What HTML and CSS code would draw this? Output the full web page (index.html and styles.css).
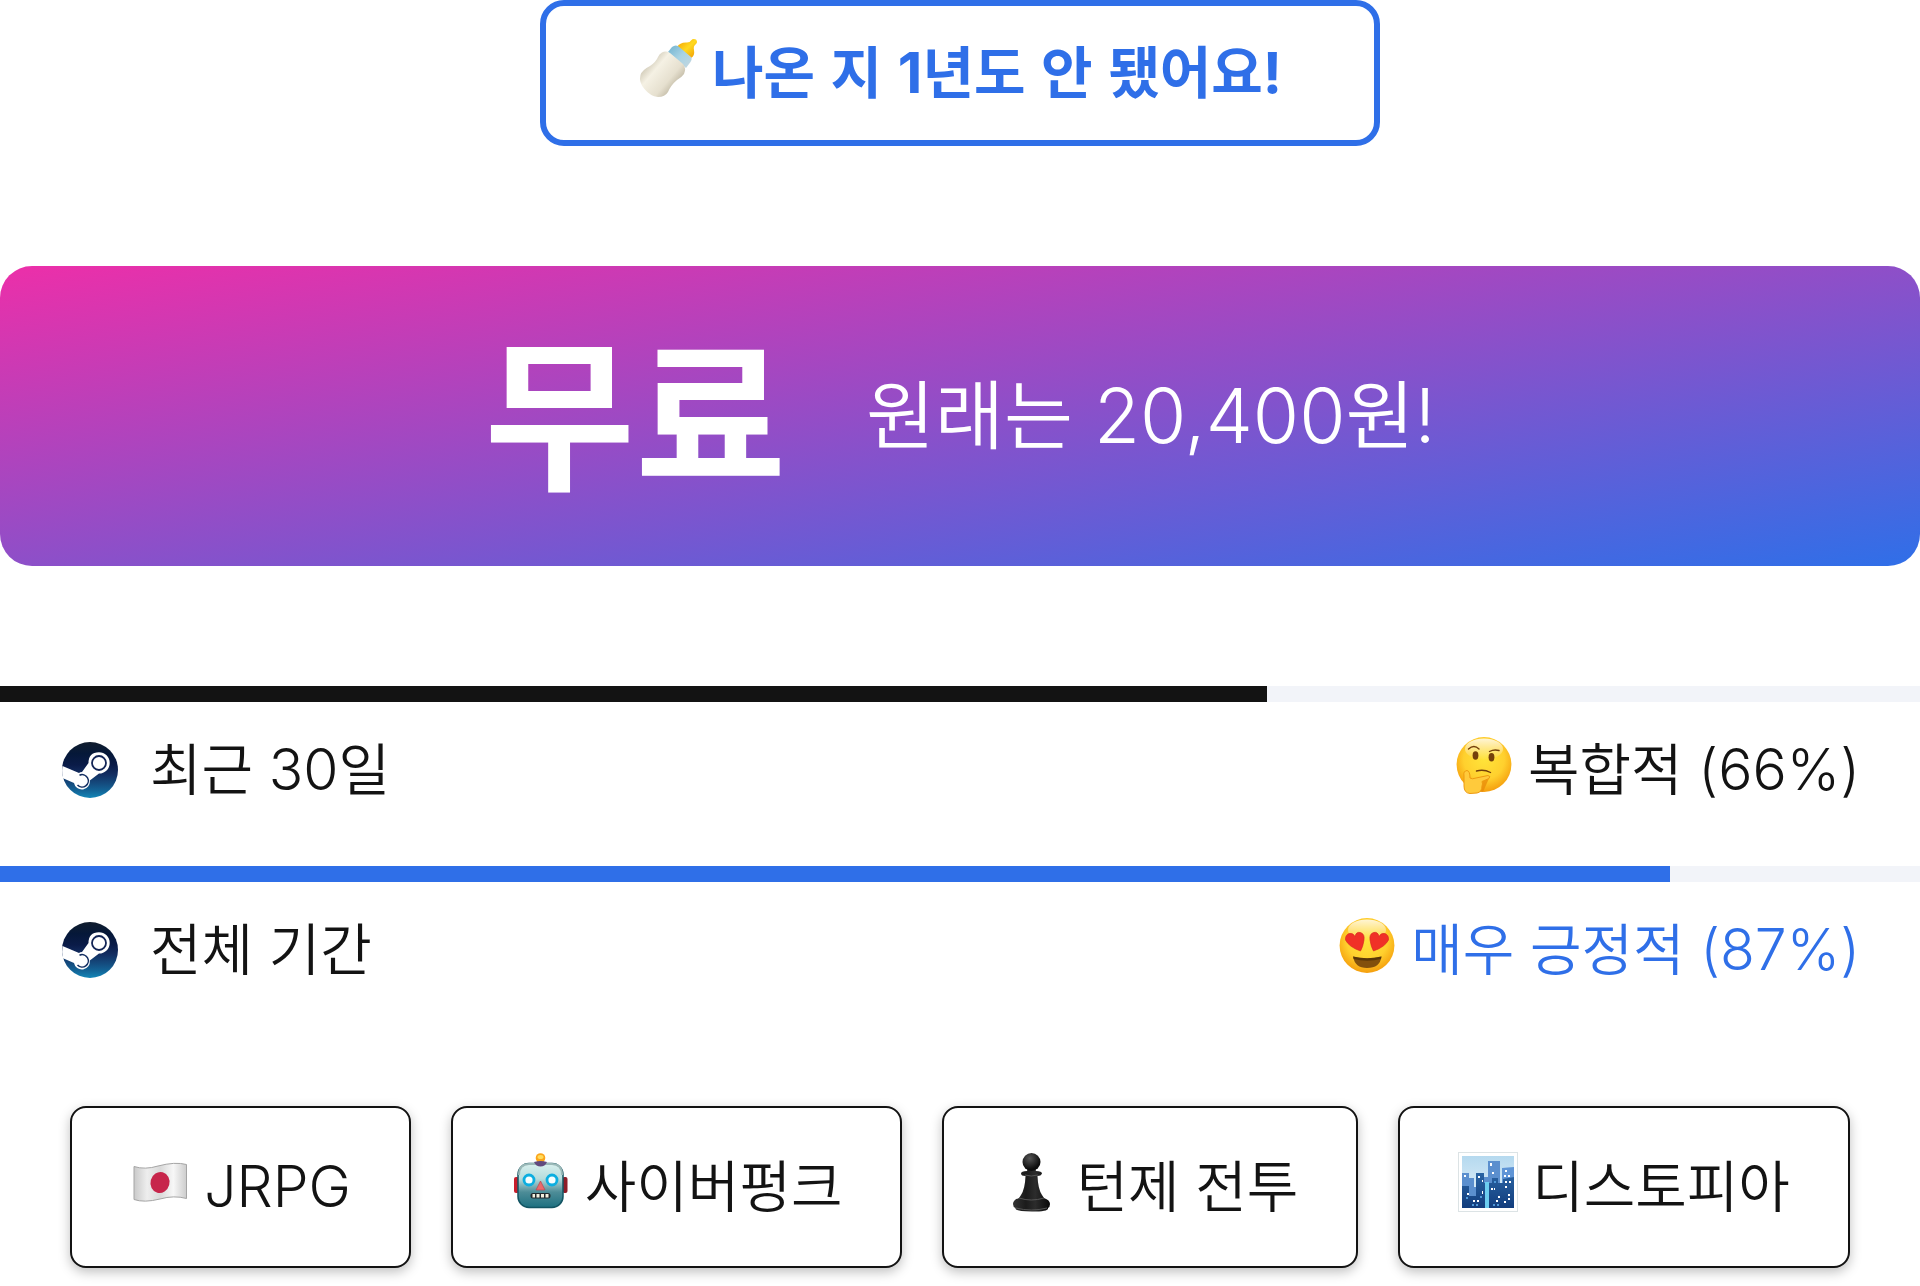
FILE: index.html
```html
<!DOCTYPE html>
<html lang="ko">
<head>
<meta charset="utf-8">
<meta name="viewport" content="width=device-width, initial-scale=1">
<title>게임 정보</title>
<link rel="stylesheet" href="styles.css">
</head>
<body>
<svg class="defs" width="0" height="0" aria-hidden="true">
  <defs>
    <linearGradient id="steam-bg" x1="0" y1="0" x2="0" y2="1">
      <stop offset="0" stop-color="#111d2e"/><stop offset=".21" stop-color="#051839"/><stop offset=".41" stop-color="#0a1b48"/><stop offset=".58" stop-color="#132e62"/><stop offset=".74" stop-color="#144b7e"/><stop offset=".87" stop-color="#136497"/><stop offset="1" stop-color="#1387b8"/>
    </linearGradient>
    <radialGradient id="face" cx=".5" cy=".4" r=".62">
      <stop offset="0" stop-color="#ffe43a"/><stop offset=".6" stop-color="#ffd02e"/><stop offset="1" stop-color="#f49a0a"/>
    </radialGradient>
    <linearGradient id="shine" x1="0" y1="0" x2="0" y2="1">
      <stop offset="0" stop-color="#fff" stop-opacity=".8"/><stop offset="1" stop-color="#fff" stop-opacity="0"/>
    </linearGradient>
    <symbol id="steam" viewBox="0 0 60 60">
      <circle cx="30" cy="30" r="28" fill="url(#steam-bg)"/>
      <path fill="#fff" d="M2.500 26 L19 33 Q20 32 22 32 L28.500 23 Q28.500 12.200 39 12.200 A10.700 10.700 0 0 1 39 33.600 L29.800 40.500 A8 8 0 0 1 14 43 L3 38.200 Q1.500 32 2.500 26Z"/>
      <circle cx="39" cy="23" r="7" fill="none" stroke="#132556" stroke-width="1.800"/>
      <path d="M17.500 45 A6.200 6.200 0 1 0 19.500 35.200" fill="none" stroke="#132e62" stroke-width="1.500"/>
    </symbol>
  </defs>
</svg>

<main class="page">
  <p class="notice">
    <svg class="icon" viewBox="0 0 60 60" aria-hidden="true">
      <defs>
        <linearGradient id="milk" x1=".15" y1=".2" x2=".85" y2=".8"><stop offset="0" stop-color="#c9c2ae"/><stop offset=".3" stop-color="#f5f1e4"/><stop offset=".7" stop-color="#e6e0cf"/><stop offset="1" stop-color="#b8b09a"/></linearGradient>
        <linearGradient id="collar" x1="0" y1="0" x2="1" y2="1"><stop offset="0" stop-color="#6fb2cf"/><stop offset=".5" stop-color="#a8d3e4"/><stop offset="1" stop-color="#c5d7df"/></linearGradient>
        <linearGradient id="teat" x1="0" y1="0" x2="1" y2="1"><stop offset="0" stop-color="#f19a00"/><stop offset=".5" stop-color="#ffd91f"/><stop offset="1" stop-color="#ef9500"/></linearGradient>
      </defs>
      <path fill="url(#teat)" d="M39 9 Q42 4 49 4.500 Q52 4.500 53 2.500 Q55 .200 58 1.500 Q60 4 58 6 Q55 8 56 12 Q57 18 53 20Z"/>
      <path fill="url(#collar)" d="M34 9 Q37 6.500 40 8 L53 19 Q54.500 21 52.500 24 L48 30 L30 14Z"/>
      <path fill="url(#milk)" d="M24 14.500 Q28 12.500 32 15 L45 26 Q48.500 30 46 36 Q44 39 39 42 Q33 47 30 54 Q27 59 20 59 Q12 58 6.500 51 Q.500 44 2.500 37 Q4 32 12 28 Q18 24 20 19 Q21 16 24 14.500Z"/>
    </svg>
    <span class="label">나온 지 <span class="latin">1</span>년도 안 됐어요<span class="latin">!</span></span>
  </p>

  <section class="price">
    <strong class="price-now">무료</strong>
    <span class="price-was">원래는 <span class="latin">20,400</span>원<span class="latin">!</span></span>
  </section>

  <section class="reviews">
    <div class="review">
      <div class="track" role="progressbar" aria-label="최근 30일" aria-valuenow="66" aria-valuemin="0" aria-valuemax="100"><div class="fill" style="width:66%"></div></div>
      <div class="review-row">
        <span class="source"><svg class="logo" aria-hidden="true"><use href="#steam"/></svg><span class="label">최근 <span class="latin">30</span>일</span></span>
        <span class="score">
          <svg class="icon" viewBox="0 0 60 60" aria-hidden="true">
            <circle cx="30" cy="29.500" r="27.400" fill="url(#face)"/>
            <ellipse cx="30" cy="14" rx="19" ry="10.500" fill="url(#shine)"/>
            <g fill="none" stroke="#75400b" stroke-width="1.400" stroke-linecap="round"><path d="M14.500 14 Q20 9 25 14M35.500 16.500 Q40 14 45 15.500M22.500 36 Q30 34 36.500 37.500"/></g>
            <ellipse cx="21.500" cy="20.500" rx="2.900" ry="4.200" fill="#75400b"/><ellipse cx="37.500" cy="22.300" rx="2.900" ry="4.200" fill="#75400b"/>
            <path fill="#e88908" d="M29 46 L36 41 L29 57 L24 57Z" opacity=".75"/>
            <path fill="#ffca3c" stroke="#ee990f" d="M10 41 Q9 36 13 35.500 Q16 36 16 43 Q18 44.500 22 43 L34 40.500 Q37 41 35 43.500 L28 46.500 Q29 49 28 51 Q28 57 23 58 L16 58.500 Q10 58 10 51Z"/>
          </svg>
          <span class="label">복합적 <span class="latin">(66%)</span></span>
        </span>
      </div>
    </div>
    <div class="review positive">
      <div class="track" role="progressbar" aria-label="전체 기간" aria-valuenow="87" aria-valuemin="0" aria-valuemax="100"><div class="fill" style="width:87%"></div></div>
      <div class="review-row">
        <span class="source"><svg class="logo" aria-hidden="true"><use href="#steam"/></svg><span class="label">전체 기간</span></span>
        <span class="score">
          <svg class="icon" viewBox="0 0 60 60" aria-hidden="true">
            <circle cx="30" cy="30.500" r="27.400" fill="url(#face)"/>
            <ellipse cx="30" cy="15" rx="19" ry="10.500" fill="url(#shine)"/>
            <path fill="#82500c" d="M16 41.500 Q30 45 44.500 41.500 Q43 53 30 53 Q18 53 16 41.500Z"/>
            <path fill="#3d2507" d="M16 41.500 Q30 45 44.500 41.500 L44 44 Q30 47.500 16.500 44Z" opacity=".6"/>
            <path fill="#f03127" stroke="#d52720" stroke-width=".6" d="M23.500 36 Q12 32 8.500 25 Q8 20 12 18.500 Q16 17.500 18 21.500 Q19 16.500 23.500 17.500 Q28 19 27 25 Q26 32 23.500 36ZM36.500 36 Q48 32 51.500 25 Q52 20 48 18.500 Q44 17.500 42 21.500 Q41 16.500 36.500 17.500 Q32 19 33 25 Q34 32 36.500 36Z"/>
          </svg>
          <span class="label">매우 긍정적 <span class="latin">(87%)</span></span>
        </span>
      </div>
    </div>
  </section>

  <nav class="tags" aria-label="태그">
    <button class="tag" type="button">
      <svg class="icon" viewBox="0 0 60 60" aria-hidden="true">
        <defs><linearGradient id="cloth"><stop offset="0" stop-color="#c9c9c9"/><stop offset=".25" stop-color="#eee"/><stop offset=".5" stop-color="#d9d9d9"/><stop offset=".75" stop-color="#f7f7f7"/><stop offset="1" stop-color="#ccc"/></linearGradient></defs>
        <path fill="url(#cloth)" stroke="#a5a5a5" d="M4 14.500 Q15 18 28 14 Q45 9.500 56.500 12.500 L56.500 46.500 Q44 43 30 47 Q14 51 4 47.500Z"/>
        <ellipse cx="30" cy="30.500" rx="9.500" ry="10.500" fill="#c7254b" transform="rotate(15 30 30.500)"/>
      </svg>
      <span class="label"><span class="latin">JRPG</span></span>
    </button>
    <button class="tag" type="button">
      <svg class="icon" viewBox="0 0 60 60" aria-hidden="true">
        <defs><linearGradient id="metal" x1="0" y1="0" x2="0" y2="1"><stop offset="0" stop-color="#d9f0ee"/><stop offset=".35" stop-color="#b5dcdc"/><stop offset=".65" stop-color="#4d8c97"/><stop offset="1" stop-color="#1d7080"/></linearGradient></defs>
        <rect x="3" y="25" width="5" height="16" rx="2" fill="#c81e2c"/><rect x="51.500" y="25" width="5" height="16" rx="2" fill="#8e1d28"/>
        <circle cx="29.500" cy="6" r="4.800" fill="#fba51b"/><ellipse cx="29.500" cy="5" rx="3" ry="2" fill="#ffdc5c"/>
        <rect x="7" y="11.500" width="45" height="44" rx="11" fill="url(#metal)" stroke="#135563" stroke-width="1.500"/>
        <path d="M8 23 Q8 12 18 12 H41 Q51 12 51 23" fill="none" stroke="#9bb9b8" stroke-width="2"/>
        <path d="M23 10 Q29.500 8 36 10 Q34 14.500 29.500 14.500 Q25 14.500 23 10Z" fill="#624b7e"/>
        <g fill="#f6ffff" stroke="#0caee0" stroke-width="2.800"><circle cx="18" cy="28" r="5"/><circle cx="41" cy="28" r="5"/></g>
        <path d="M29.500 29 L34 38 H25Z" fill="#e9696a" stroke="#b84551" stroke-width=".7"/>
        <rect x="19.500" y="41" width="20" height="5.500" rx="2.500" fill="#22292c"/><path d="M21.500 42 h2.500 v3.500 h-2.500ZM25.500 42 h3 v3.500 h-3ZM30 42 h3 v3.500 h-3ZM34.500 42 h3 v3.500 h-3Z" fill="#f3f0df"/>
      </svg>
      <span class="label">사이버펑크</span>
    </button>
    <button class="tag" type="button">
      <svg class="icon" viewBox="0 0 60 60" aria-hidden="true">
        <defs><linearGradient id="ebony"><stop offset="0" stop-color="#333"/><stop offset=".35" stop-color="#1b1b1b"/><stop offset=".6" stop-color="#2c2c2c"/><stop offset="1" stop-color="#090909"/></linearGradient><radialGradient id="knob" cx=".4" cy=".3" r=".6"><stop offset="0" stop-color="#555"/><stop offset="1" stop-color="#0c0c0c"/></radialGradient></defs>
        <path fill="url(#ebony)" d="M26 16 H33 L34 19 Q40 19 40 21.500 Q39 24 35.500 24 Q36 37 40 43 L42 46 Q48 48 48 52 Q48 55 46 56 Q47 59.500 30 59.500 Q12 59.500 13.500 56 Q11 55 11 52 Q11 48 17 46 L19 43 Q23 37 23.500 24 Q19 24 19 21.500 Q19 19 25 19Z"/>
        <circle cx="29.500" cy="10" r="9" fill="url(#knob)"/>
        <path d="M17 46 Q29 50 42 46M14 56 Q29 60 45 56M23 23 Q29 25 36 23" fill="none" stroke="#555" stroke-width="1"/>
      </svg>
      <span class="label">턴제 전투</span>
    </button>
    <button class="tag" type="button">
      <svg class="icon" viewBox="0 0 60 60" aria-hidden="true">
        <defs><linearGradient id="sky" x1="0" y1="0" x2="0" y2="1"><stop offset="0" stop-color="#b5d9ef"/><stop offset="1" stop-color="#eaf5fb"/></linearGradient><linearGradient id="tower" x1="0" y1="0" x2="0" y2="1"><stop offset="0" stop-color="#2a64a3"/><stop offset="1" stop-color="#123d7d"/></linearGradient></defs>
        <rect x=".5" y=".5" width="59" height="59" fill="#fff" stroke="#dce3e5"/>
        <rect x="4" y="4" width="52" height="52" fill="url(#sky)"/>
        <path d="M4 21 H11 V26 H16 V35 H22 V56 H4ZM26 25 H30 V9 H42 V56 H26Z" fill="#5b8fce"/><path d="M44 16 L56 15 V56 H44Z" fill="#5f95d6"/>
        <path d="M4 34 H11 V44 H18 V21 H26 V31 H34 V26 H40 V31 H45 V27 L56 25 V56 H4Z" fill="url(#tower)"/>
        <path d="M27 30 H31 V56 H27Z" fill="#6ccdf0"/>
        <g fill="#fff"><path d="M32 11h2v3h-2ZM34 20h2v2h-2ZM47 18h2v2h-2ZM46 23h2v2h-2ZM50 23h2v2h-2ZM6 23h2v2h-2ZM20 24h2v2h-2ZM24 28h1v2h-1ZM33 36h2v2h-2ZM36 36h1v2h-1ZM47 29h2v2h-2ZM51 29h2v2h-2ZM47 34h2v2h-2ZM9 41h2v2h-2ZM24 39h1v3h-1ZM50 42h2v2h-2ZM50 46h2v2h-2ZM40 44h2v2h-2ZM15 48h2v2h-2ZM19 48h2v2h-2ZM38 48h2v2h-2ZM46 49h2v2h-2Z"/></g>
        <path d="M14 52h2v2h-2ZM18 52h2v2h-2ZM22 44h2v2h-2ZM35 52h2v2h-2ZM39 52h2v2h-2ZM8 45h2v2h-2ZM36 29h2v2h-2Z" fill="#4f98d8"/>
      </svg>
      <span class="label">디스토피아</span>
    </button>
  </nav>
</main>
</body>
</html>
```
FILE: styles.css
```css
:root {
  --ink: #131313;
  --blue: #2f6fe8;
  --track: #f2f4f9;
}

* {
  box-sizing: border-box;
}

body {
  margin: 0;
  background: #fff;
  color: var(--ink);
  font-family: "Noto Sans CJK KR", sans-serif;
  font-size: 56px;
  font-weight: 350;
  line-height: 64px;
}

.defs {
  display: block;
}

.page {
  display: flex;
  flex-direction: column;
  gap: 120px;
  padding-bottom: 18px;
}

.label {
  padding-bottom: 8px;
}

.latin {
  font-family: "Inter", sans-serif;
  font-size: 57px;
  font-weight: 300;
  line-height: 0;
}

.icon {
  flex: none;
  width: 60px;
  height: 60px;
  margin-bottom: 10px;
}

.notice {
  display: flex;
  align-items: center;
  align-self: center;
  gap: 14px;
  margin: 0;
  padding: 31px 92px;
  border: 6px solid var(--blue);
  border-radius: 24px;
  color: var(--blue);
  font-weight: 700;
}

.notice .latin {
  font-weight: 700;
}

.price {
  display: flex;
  align-items: center;
  justify-content: center;
  gap: 80px;
  padding: 50px 60px 70px;
  border-radius: 32px;
  background: linear-gradient(to bottom right, #ec2fa9, #2f6fe8);
  color: #fff;
}

.price-now {
  font-size: 164px;
  font-weight: 700;
  line-height: 180px;
}

.price-was {
  padding-top: 10px;
  font-size: 75px;
  line-height: 100px;
}

.price-was .latin {
  font-size: 75px;
}

.reviews {
  display: flex;
  flex-direction: column;
  gap: 60px;
}

.track {
  height: 16px;
  background: var(--track);
}

.fill {
  height: 100%;
  background: var(--ink);
}

.positive .fill {
  background: var(--blue);
}

.positive .score {
  color: var(--blue);
}

.review-row {
  display: flex;
  justify-content: space-between;
  padding: 32px 60px 0;
}

.source,
.score {
  display: flex;
  align-items: center;
  gap: 14px;
}

.source {
  gap: 30px;
}

.logo {
  width: 60px;
  height: 60px;
}

.tags {
  display: flex;
  justify-content: center;
  gap: 40px;
}

.tag {
  display: flex;
  align-items: center;
  gap: 14px;
  padding: 43px 58px;
  border: 2px solid var(--ink);
  border-radius: 16px;
  background: #fff;
  box-shadow: 0 4px 12px rgba(0, 0, 0, 0.25);
  color: inherit;
  font: inherit;
  white-space: nowrap;
}
```
